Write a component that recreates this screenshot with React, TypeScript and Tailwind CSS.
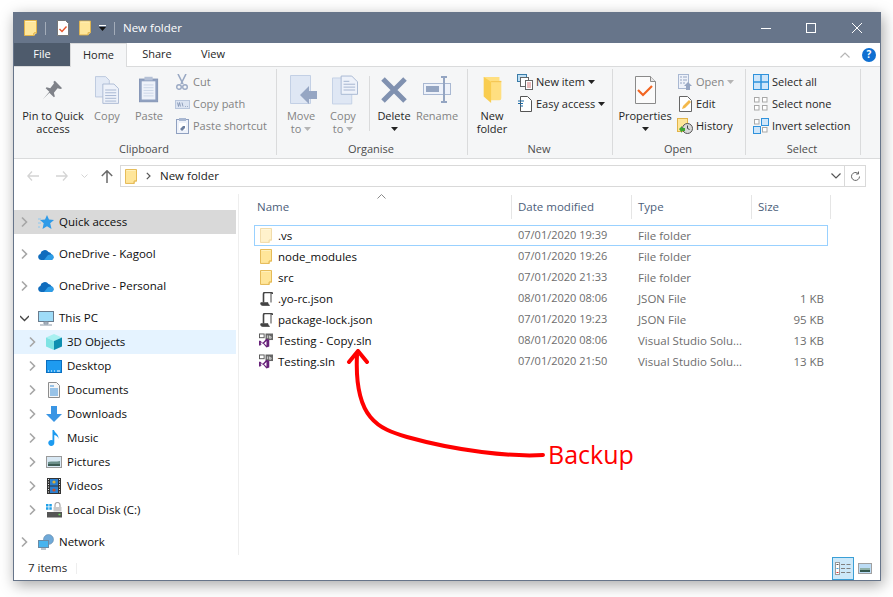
import type { ReactNode } from 'react'

const Folder = ({ w = 13, h = 16, faded = false }: { w?: number; h?: number; faded?: boolean }) => (
  <svg width={w} height={h} viewBox="0 0 13 16" opacity={faded ? 0.5 : 1} className="shrink-0">
    <path d="M.5.5h12v12.5h-2.5v2.5H.5z" fill="#ffe69a" stroke="#e2b44a" />
    <path d="M10 15.5V13h2.5" fill="#fff3c4" stroke="#e2b44a" />
    <path d="M1.500 1.500h10" stroke="#fff2c0" />
  </svg>
)

const Chevron = ({ open = false }: { open?: boolean }) => (
  <svg width="9" height="12" viewBox="0 0 9 12" className="shrink-0">
    {open ? (
      <path d="M0 4l4.500 4.500L9 4" fill="none" stroke="#444" strokeWidth="1.300" />
    ) : (
      <path d="M2 1.500L6.500 6 2 10.500" fill="none" stroke="#a6a6a6" strokeWidth="1.600" />
    )}
  </svg>
)

const Caret = ({ color = '#222' }: { color?: string }) => (
  <svg width="7" height="4" viewBox="0 0 7 4" className="shrink-0">
    <path d="M0 0h7L3.500 4z" fill={color} />
  </svg>
)

const Pin = () => (
  <svg width="22" height="22" viewBox="0 0 24 24">
    <path d="M14 2l8 8-2 1-3-1-4 5 1 4-1 1-5-5-7 7 7-8-4-4 1-1 4 1 4-5-.5-2z" fill="#7f8289" />
  </svg>
)

const CopyDocs = () => (
  <svg width="24" height="28" viewBox="0 0 26 30">
    <path d="M.5.5h11l4 4v18H.5z" fill="#e3eaf6" stroke="#b9c6dc" />
    <path d="M8.500 8.500h12l5 5v16h-17z" fill="#eef2fa" stroke="#a9b8d2" />
    <path d="M11 15h12M11 18h12M11 21h12M11 24h12M11 27h12" stroke="#a3b3cf" />
  </svg>
)

const PasteBoard = () => (
  <svg width="20" height="29" viewBox="0 0 22 30">
    <rect x=".5" y="3.500" width="20" height="25" fill="#8fa0c0" stroke="#8394b5" />
    <rect x="3" y="6" width="15" height="20" fill="#eef2fa" />
    <path d="M5 10h11M5 13h11M5 16h11M5 19h11M5 22h11" stroke="#c9d4e6" />
    <rect x="6" y="1" width="9" height="4" fill="#b4c0d6" />
  </svg>
)

const Scissors = () => (
  <svg width="12" height="16" viewBox="0 0 12 16">
    <path d="M2 0l5 10M10 0L5 10" stroke="#9aa9c4" strokeWidth="1.600" fill="none" />
    <circle cx="3" cy="13" r="2.300" fill="none" stroke="#9aa9c4" strokeWidth="1.400" />
    <circle cx="9" cy="13" r="2.300" fill="none" stroke="#9aa9c4" strokeWidth="1.400" />
  </svg>
)

const CopyPath = () => (
  <svg width="15" height="9" viewBox="0 0 15 9">
    <rect x=".5" y=".5" width="14" height="8" fill="#dce4f2" stroke="#b9c6dc" />
    <path d="M2.500 2.500l1 4 1-4 1 4M7 2.500l1 4M10 6.500h.8M12 6.500h.8" stroke="#7e8fae" strokeWidth=".8" fill="none" />
  </svg>
)

const PasteShortcut = () => (
  <svg width="13" height="16" viewBox="0 0 13 16">
    <rect x=".5" y="1.500" width="12" height="14" fill="#eef2fa" stroke="#8fa0c0" />
    <rect x="3" y="0" width="7" height="3" fill="#a9b8d2" />
    <rect x="3" y="5" width="7" height="7" fill="#fff" />
    <path d="M4 11l3-3H5h4v4v-2l-3 3z" fill="#6c7f9f" />
  </svg>
)

const MoveTo = () => (
  <svg width="27" height="29" viewBox="0 0 27 29">
    <path d="M.5.5h20v28H.5z" fill="#dfe7f4" stroke="#c3d0e5" />
    <path d="M10 20l9-9v5h8v8h-8v5z" fill="#96a6c3" />
  </svg>
)

const CopyTo = () => (
  <svg width="26" height="30" viewBox="0 0 27 30">
    <path d="M.5 2.500h20v27H.5z" fill="#dfe7f4" stroke="#c3d0e5" />
    <path d="M9.500.5h11l6 6v13h-17z" fill="#eef2fa" stroke="#a9b8d2" />
    <path d="M12 6h6M12 9h12M12 12h12M12 15h12" stroke="#a3b3cf" />
  </svg>
)

const DeleteX = () => (
  <svg width="26" height="26" viewBox="0 0 26 26">
    <path d="M2 2l22 22M24 2L2 24" stroke="#8091b0" strokeWidth="5" />
  </svg>
)

const RenameIcon = () => (
  <svg width="28" height="27" viewBox="0 0 28 27">
    <rect x=".5" y="7.500" width="27" height="11" fill="#eef2fa" stroke="#a9b8d2" />
    <rect x="3" y="10" width="13" height="6" fill="#94a5c2" />
    <path d="M18 1h6M21 1v25M18 26h6" stroke="#94a5c2" strokeWidth="2" fill="none" />
  </svg>
)

const NewFolderIcon = () => (
  <svg width="19" height="26" viewBox="0 0 19 28">
    <path d="M0 0h17v4h2v19a2 2 0 0 1-2 2H7z" fill="#ffdf80" />
    <path d="M8 5h11" stroke="#f2c04a" />
    <path d="M0 0l8 5v23L0 21z" fill="#f9cd50" />
  </svg>
)

const NewItem = () => (
  <svg width="16" height="16" viewBox="0 0 16 16">
    <rect x=".5" y=".5" width="9" height="7" fill="#bfe0f5" stroke="#3a7ca8" />
    <rect x="3.500" y="3.500" width="8" height="9" fill="#fff" stroke="#666" />
    <rect x="8.500" y="6.500" width="7" height="9" fill="#fff" stroke="#666" />
    <path d="M10 9h4M10 11h4M10 13h4" stroke="#c55" strokeWidth=".8" />
  </svg>
)

const EasyAccess = () => (
  <svg width="14" height="16" viewBox="0 0 14 16">
    <path d="M2.500.5h7l4 4v11h-11z" fill="#fff" stroke="#555" />
    <path d="M0 5h6M0 7.500h5M2 10h3" stroke="#1b6aa5" strokeWidth="1.100" />
  </svg>
)

const PropertiesIcon = () => (
  <svg width="21" height="28" viewBox="0 0 21 28">
    <path d="M.5.5h15l5 5v22H.5z" fill="#fbfbfb" stroke="#8a8a8a" />
    <path d="M15.500.5v5h5" fill="#e6e6e6" stroke="#8a8a8a" />
    <path d="M3 14l5 5 9-9" fill="none" stroke="#f26522" strokeWidth="2.200" />
  </svg>
)

const OpenIcon = () => (
  <svg width="14" height="16" viewBox="0 0 14 16">
    <rect x=".5" y=".5" width="10" height="14" fill="#eef2fa" stroke="#a9b8d2" />
    <path d="M2 3h2M5 3h4M2 6h2M5 6h4M2 9h2M5 9h2" stroke="#96a6c3" />
    <path d="M10 8l4 4h-2v4H8v-4H6z" fill="#96a6c3" />
  </svg>
)

const EditIcon = () => (
  <svg width="13" height="16" viewBox="0 0 13 16">
    <path d="M.5.5h8l4 4v11H.5z" fill="#fff" stroke="#666" />
    <path d="M3 13l1-3 6-6 2 2-6 6z" fill="#f3b84a" />
  </svg>
)

const HistoryIcon = () => (
  <svg width="16" height="16" viewBox="0 0 16 16">
    <rect x=".5" y=".5" width="10" height="13" fill="#ffe69a" stroke="#e2b44a" />
    <circle cx="10.500" cy="10.500" r="5" fill="#d8d8d8" stroke="#555" />
    <path d="M10.500 7.500v3l2 1" fill="none" stroke="#444" />
    <path d="M2 11l3-3v2h3v3H5v2z" fill="#3fa535" />
  </svg>
)

const SelectAll = () => (
  <svg width="16" height="16" viewBox="0 0 16 16">
    <rect x=".5" y=".5" width="15" height="15" fill="#cfe6fa" stroke="#2f92dc" />
    <path d="M8 0v16M0 8h16" stroke="#2f92dc" strokeWidth="1.500" />
  </svg>
)

const SelectNone = () => (
  <svg width="16" height="16" viewBox="0 0 16 16" fill="#fff" stroke="#a8a8a8">
    <rect x="1.500" y="1.500" width="4.500" height="4.500" />
    <rect x="9.500" y="1.500" width="4.500" height="4.500" />
    <rect x="1.500" y="9.500" width="4.500" height="4.500" />
    <rect x="9.500" y="9.500" width="4.500" height="4.500" />
  </svg>
)

const SelectInvert = () => (
  <svg width="16" height="16" viewBox="0 0 16 16">
    <rect x="1.500" y="1.500" width="4.500" height="4.500" fill="#fff" stroke="#a8a8a8" />
    <rect x="8.500" y=".5" width="7" height="7" fill="#cfe6fa" stroke="#2f92dc" />
    <rect x=".5" y="8.500" width="7" height="7" fill="#cfe6fa" stroke="#2f92dc" />
    <rect x="9.500" y="9.500" width="4.500" height="4.500" fill="#fff" stroke="#a8a8a8" />
  </svg>
)

const BigButton = ({
  icon,
  lines,
  width,
  disabled = false,
  caret = false,
}: {
  icon: ReactNode
  lines: ReactNode[]
  width: string
  disabled?: boolean
  caret?: boolean
}) => (
  <div className={`flex flex-col items-center ${width} ${disabled ? 'text-[#838383]' : 'text-[#262626]'}`}>
    <div className="h-[42px] pt-[3px] flex items-center justify-center">{icon}</div>
    {lines.map((l, i) => (
      <div key={i} className="h-[13px] leading-[13px] flex items-center gap-[3px] whitespace-nowrap">
        {l}
      </div>
    ))}
    {caret && (
      <div className="h-[13px] flex items-center">
        <Caret />
      </div>
    )}
  </div>
)

const SmallButton = ({
  icon,
  label,
  disabled = false,
  caret = false,
}: {
  icon: ReactNode
  label: string
  disabled?: boolean
  caret?: boolean
}) => (
  <div className={`h-[22px] flex items-center gap-[2px] whitespace-nowrap ${disabled ? 'text-[#838383]' : 'text-[#262626]'}`}>
    <div className="w-[18px] flex justify-center">{icon}</div>
    <span>{label}</span>
    {caret && (
      <span className="ml-[1px]">
        <Caret color={disabled ? '#b5b5b5' : '#222'} />
      </span>
    )}
  </div>
)

const Group = ({ width, label, children }: { width: string; label: string; children: ReactNode }) => (
  <div className={`${width} h-[91px] flex flex-col shrink-0 relative`}>
    <div className="h-[74px] flex">{children}</div>
    <div className="h-[16px] leading-[16px] text-center text-[#4c4c4c] whitespace-nowrap pr-[3px]">{label}</div>
    <div className="absolute right-0 top-[2px] bottom-[3px] w-px bg-[#dadbdc]" />
  </div>
)

const Star = () => (
  <svg width="16" height="16" viewBox="0 0 16 16">
    <path d="M9 1l2 4.600 5 .4-3.800 3.200L13.500 15 9 12.300 4.500 15l1.200-5.800L2 6l5-.4z" fill="#2f9be8" />
    <path d="M0 5h3M0 9h3M0 13h2" stroke="#8cc8f0" />
  </svg>
)

const Cloud = () => (
  <svg width="16" height="11" viewBox="0 0 16 11">
    <path d="M3 11a3 3 0 0 1-.6-5.900A4.500 4.500 0 0 1 10.500 3a3.500 3.500 0 0 1 3 2.300A3 3 0 0 1 13.500 11z" fill="#0f6cbd" />
    <path d="M6 11l4-5 3.500-.7A3 3 0 0 1 13.500 11z" fill="#2e9de6" />
  </svg>
)

const Monitor = () => (
  <svg width="16" height="15" viewBox="0 0 16 15">
    <rect x=".5" y=".5" width="15" height="10" fill="#9fdcf8" stroke="#6a7c8e" />
    <path d="M6 11h4v2H6zM2 14h12" stroke="#8a97a5" fill="#b8c2cc" />
  </svg>
)

const Cube = () => (
  <svg width="16" height="16" viewBox="0 0 16 16">
    <path d="M8 0l8 3.500L8 7 0 3.500z" fill="#a8f0f0" />
    <path d="M0 3.500L8 7v9l-8-3.500z" fill="#7fe3e3" />
    <path d="M16 3.500L8 7v9l8-3.500z" fill="#0f8fb0" />
  </svg>
)

const DesktopIcon = () => (
  <svg width="16" height="13" viewBox="0 0 16 13">
    <rect x=".5" y=".5" width="15" height="12" fill="#1e9bf0" stroke="#0b6fc0" />
    <path d="M2 11h1M5 11h1M8 11h1M11 11h3" stroke="#fff" />
  </svg>
)

const DocumentsIcon = () => (
  <svg width="12" height="16" viewBox="0 0 12 16">
    <path d="M.5.5h8l3 3v12H.5z" fill="#f6f6f6" stroke="#8d8d8d" />
    <path d="M2 4h4M2 7h8M2 9h8M2 11h8M2 13h8" stroke="#3a8fd8" />
  </svg>
)

const DownloadsIcon = () => (
  <svg width="16" height="16" viewBox="0 0 16 16">
    <path d="M5 0h6v8h5l-8 8-8-8h5z" fill="#3a95e4" />
  </svg>
)

const MusicIcon = () => (
  <svg width="12" height="16" viewBox="0 0 12 16">
    <path d="M4.500 0H6c.5 3 5 4 4.500 9-.2-2-2-3.500-4.200-4v8a3 3 0 1 1-1.800-2.800z" fill="#1d9bf0" />
  </svg>
)

const PicturesIcon = () => (
  <svg width="16" height="12" viewBox="0 0 16 12">
    <rect x=".5" y=".5" width="15" height="11" fill="#d8e8f4" stroke="#9a9a9a" />
    <path d="M2 6c4-1 8 0 12-1v5H2z" fill="#6b8f8a" />
    <path d="M2 8h12v2H2z" fill="#3d5d55" />
  </svg>
)

const VideosIcon = () => (
  <svg width="14" height="16" viewBox="0 0 14 16">
    <rect width="14" height="16" fill="#333" />
    <rect x="3" y="1" width="8" height="6.500" fill="#2b7fd0" />
    <rect x="3" y="8.500" width="8" height="6.500" fill="#2b7fd0" />
    <circle cx="7" cy="4" r="1.600" fill="#d8b03a" />
    <circle cx="7" cy="12" r="1.600" fill="#c5502e" />
    <path d="M1.500 1v14M12.500 1v14" stroke="#eee" strokeDasharray="1 1.500" />
  </svg>
)

const DiskIcon = () => (
  <svg width="16" height="16" viewBox="0 0 16 16">
    <path d="M0 2h2.500v2.500H0zM3.300 2h2.500v2.500H3.300zM0 5.300h2.500v2.500H0zM3.300 5.300h2.500v2.500H3.300z" fill="#1fa0e8" />
    <path d="M9 5V3a2.500 2.500 0 0 1 5 0v2" fill="none" stroke="#a8a8a8" strokeWidth="1.200" />
    <rect x="7.500" y="5" width="8" height="4.500" fill="#c9c9c9" />
    <rect x="1" y="10" width="15" height="5.500" fill="#555" />
    <path d="M12.500 12.500h2" stroke="#6fdc5a" strokeWidth="1.500" />
  </svg>
)

const NetworkIcon = () => (
  <svg width="16" height="16" viewBox="0 0 16 16">
    <circle cx="10.500" cy="5.500" r="5" fill="#6fa9d8" stroke="#5a7f9f" strokeWidth=".5" />
    <rect x=".5" y="6.500" width="10" height="7" fill="#49b4ee" stroke="#6a8aa5" />
    <path d="M3 15h5" stroke="#7a8a9a" />
  </svg>
)

const JsonIcon = () => (
  <svg width="13" height="14" viewBox="0 0 13 14" fill="none" stroke="#444">
    <path d="M3.500 10.500V2A1.500 1.500 0 0 1 5 .5h6A1.500 1.500 0 0 1 12.500 2" strokeWidth="1.600" />
    <path d="M11 1v9.500" />
    <path d="M.8 10.800H8v1a1.500 1.500 0 0 0 1.500 1.500H2.200A1.500 1.500 0 0 1 .8 11.800z" fill="#444" />
  </svg>
)

const SlnIcon = () => (
  <svg width="15" height="15" viewBox="0 0 15 15">
    <rect x=".5" y=".5" width="5" height="4" fill="#fff" stroke="#555" />
    <rect x="7" y="0" width="8" height="7" fill="#666" />
    <path d="M9 2v3M11 2v3h2V3.500h-2" stroke="#fff" strokeWidth=".7" fill="none" />
    <path d="M0 8l1-.5L4 10l4-4.500 3 1.500v7l-3 1-4-4.500-3 2.500-1-.5z" fill="#68217a" />
    <path d="M2 9v3l1.500-1.500zM8 8v5l-2.500-2.500z" fill="#fff" />
  </svg>
)

const SideRow = ({
  icon,
  label,
  level = 0,
  open = false,
  bg = '',
}: {
  icon: ReactNode
  label: string
  level?: number
  open?: boolean
  bg?: string
}) => (
  <div className={`h-[24px] flex items-center whitespace-nowrap text-[#0d0d0d] ${level ? 'pl-[14px]' : 'pl-[6px]'} ${bg}`}>
    <Chevron open={open} />
    <div className="w-[16px] ml-[9px] flex justify-center">{icon}</div>
    <span className="ml-[5px]">{label}</span>
  </div>
)

const files = [
  { name: '.vs', date: '07/01/2020 19:39', type: 'File folder', size: '', icon: <Folder w={12} h={15} faded /> },
  { name: 'node_modules', date: '07/01/2020 19:26', type: 'File folder', size: '', icon: <Folder w={12} h={15} /> },
  { name: 'src', date: '07/01/2020 21:33', type: 'File folder', size: '', icon: <Folder w={12} h={15} /> },
  { name: '.yo-rc.json', date: '08/01/2020 08:06', type: 'JSON File', size: '1 KB', icon: <JsonIcon /> },
  { name: 'package-lock.json', date: '07/01/2020 19:23', type: 'JSON File', size: '95 KB', icon: <JsonIcon /> },
  { name: 'Testing - Copy.sln', date: '08/01/2020 08:06', type: 'Visual Studio Solu...', size: '13 KB', icon: <SlnIcon /> },
  { name: 'Testing.sln', date: '07/01/2020 21:50', type: 'Visual Studio Solu...', size: '13 KB', icon: <SlnIcon /> },
]

export default function App() {
  return (
    <div className="w-[893px] h-[597px] bg-white pt-[12px] pl-[13px] overflow-hidden font-['Open_Sans',sans-serif] text-[11.5px]">
      <div className="relative w-[868px] h-[569px] border border-[#67758a] bg-white flex flex-col shadow-[2px_4px_14px_rgba(0,0,0,0.35)]">
        {/* title bar */}
        <div className="h-[30px] bg-[#67758a] flex items-center text-white shrink-0">
          <div className="ml-[10px]">
            <Folder />
          </div>
          <div className="ml-[8px] w-px h-[13px] bg-[#a3acb9]" />
          <svg width="12" height="16" viewBox="0 0 12 16" className="ml-[11px]">
            <path d="M.5.5h8l3 3v12H.5z" fill="#fff" stroke="#777" />
            <path d="M2.500 9L5 11.500l4.500-5" fill="none" stroke="#e8542a" strokeWidth="1.400" />
          </svg>
          <div className="ml-[10px]">
            <Folder w={12} />
          </div>
          <div className="ml-[8px] flex flex-col gap-[1px] items-center">
            <div className="w-[7px] h-px bg-white" />
            <Caret color="#111" />
          </div>
          <div className="ml-[8px] w-px h-[13px] bg-[#a3acb9]" />
          <span className="ml-[8px]">New folder</span>
          <div className="ml-auto flex items-center">
            <div className="w-[10px] h-px bg-white mr-[35px]" />
            <div className="w-[10px] h-[10px] border border-white mr-[36px]" />
            <svg width="10" height="10" viewBox="0 0 10 10" className="mr-[18px]">
              <path d="M0 0l10 10M10 0L0 10" stroke="#fff" />
            </svg>
          </div>
        </div>

        {/* tabs */}
        <div className="h-[24px] flex items-stretch shrink-0 border-b border-[#dadbdc] text-[11px]">
          <div className="w-[56px] bg-[#4e5b6c] text-white flex items-center justify-center">File</div>
          <div className="w-[57px] h-[24px] bg-[#f5f6f7] border-x border-t border-[#dadbdc] flex items-center justify-center text-[#262626]">
            Home
          </div>
          <div className="w-[60px] flex items-center justify-center text-[#262626]">Share</div>
          <div className="w-[52px] flex items-center justify-center text-[#262626]">View</div>
          <div className="ml-auto flex items-center">
            <svg width="10" height="6" viewBox="0 0 10 6" className="mr-[12px]">
              <path d="M.5 5.500L5 1l4.500 4.500" fill="none" stroke="#b5b5b5" strokeWidth="1.200" />
            </svg>
            <div className="w-[14px] h-[14px] rounded-full bg-[#0f6fd1] text-white text-[10px] font-bold flex items-center justify-center mr-[4px]">
              ?
            </div>
          </div>
        </div>

        {/* ribbon */}
        <div className="h-[92px] bg-[#f5f6f7] border-b border-[#dadbdc] flex shrink-0 text-[11px]">
          <Group width="w-[263px]" label="Clipboard">
            <div className="w-[3px]" />
            <BigButton width="w-[72px]" icon={<Pin />} lines={['Pin to Quick', 'access']} />
            <BigButton width="w-[36px]" disabled icon={<CopyDocs />} lines={['Copy']} />
            <BigButton width="w-[48px]" disabled icon={<PasteBoard />} lines={['Paste']} />
            <div className="pt-[4px]">
              <SmallButton disabled icon={<Scissors />} label="Cut" />
              <SmallButton disabled icon={<CopyPath />} label="Copy path" />
              <SmallButton disabled icon={<PasteShortcut />} label="Paste shortcut" />
            </div>
          </Group>
          <Group width="w-[191px]" label="Organise">
            <div className="w-[4px]" />
            <BigButton
              width="w-[40px]"
              disabled
              icon={<div className="ml-[5px]"><MoveTo /></div>}
              lines={['Move', <>to <Caret color="#b5b5b5" /></>]}
            />
            <BigButton
              width="w-[44px]"
              disabled
              icon={<div className="ml-[4px]"><CopyTo /></div>}
              lines={['Copy', <>to <Caret color="#b5b5b5" /></>]}
            />
            <div className="w-px h-[55px] bg-[#dadbdc] ml-[4px] mt-[9px]" />
            <BigButton width="w-[48px]" icon={<DeleteX />} lines={['Delete']} caret />
            <BigButton width="w-[38px]" disabled icon={<RenameIcon />} lines={['Rename']} />
          </Group>
          <Group width="w-[145px]" label="New">
            <div className="w-[2px]" />
            <BigButton width="w-[44px]" icon={<NewFolderIcon />} lines={['New', 'folder']} />
            <div className="pt-[4px] pl-[2px]">
              <SmallButton icon={<NewItem />} label="New item" caret />
              <SmallButton icon={<EasyAccess />} label="Easy access" caret />
            </div>
          </Group>
          <Group width="w-[133px]" label="Open">
            <div className="w-[1px]" />
            <BigButton width="w-[62px]" icon={<PropertiesIcon />} lines={['Properties']} caret />
            <div className="pt-[4px]">
              <SmallButton disabled caret icon={<OpenIcon />} label="Open" />
              <SmallButton icon={<EditIcon />} label="Edit" />
              <SmallButton icon={<HistoryIcon />} label="History" />
            </div>
          </Group>
          <Group width="w-[115px]" label="Select">
            <div className="w-[6px]" />
            <div className="pt-[4px]">
              <SmallButton icon={<SelectAll />} label="Select all" />
              <SmallButton icon={<SelectNone />} label="Select none" />
              <SmallButton icon={<SelectInvert />} label="Invert selection" />
            </div>
          </Group>
        </div>

        {/* address bar */}
        <div className="h-[31px] pt-[3px] flex items-center shrink-0">
          <svg width="12" height="10" viewBox="0 0 12 10" className="ml-[13px]">
            <path d="M5 .5L.8 5 5 9.500M1 5h11" fill="none" stroke="#d4d4d4" strokeWidth="1.300" />
          </svg>
          <svg width="12" height="10" viewBox="0 0 12 10" className="ml-[17px]">
            <path d="M7 .5L11.200 5 7 9.500M11 5H0" fill="none" stroke="#d4d4d4" strokeWidth="1.300" />
          </svg>
          <svg width="7" height="4" viewBox="0 0 7 4" className="ml-[13px]">
            <path d="M.5.5l3 3 3-3" fill="none" stroke="#d4d4d4" />
          </svg>
          <svg width="12" height="13" viewBox="0 0 12 13" className="ml-[13px]">
            <path d="M.8 6L6 .8 11.200 6M6 1v12" fill="none" stroke="#6a6a6a" strokeWidth="1.500" />
          </svg>
          <div className="ml-[7px] w-[725px] h-[22px] border border-[#d9d9d9] flex items-center">
            <div className="ml-[4px]">
              <Folder w={12} h={15} />
            </div>
            <svg width="5" height="8" viewBox="0 0 5 8" className="ml-[9px]">
              <path d="M.8.8L4 4 .8 7.200" fill="none" stroke="#555" strokeWidth="1.200" />
            </svg>
            <span className="ml-[9px] text-[#1a1a1a]">New folder</span>
            <svg width="10" height="6" viewBox="0 0 10 6" className="ml-auto mr-[3px]">
              <path d="M.5.5L5 5 9.500.5" fill="none" stroke="#555" strokeWidth="1.200" />
            </svg>
          </div>
          <div className="w-[21px] h-[22px] border border-l-0 border-[#d9d9d9] flex items-center justify-center">
            <svg width="11" height="11" viewBox="0 0 11 11">
              <path d="M9.500 5.500a4 4 0 1 1-1.300-3M8.500.5V3H6" fill="none" stroke="#666" />
            </svg>
          </div>
        </div>

        {/* body */}
        <div className="flex-1 flex min-h-0">
          <div className="w-[224px] shrink-0 pr-[2px] pt-[20px]">
            <SideRow icon={<Star />} label="Quick access" bg="bg-[#d9d9d9]" />
            <div className="h-[8px]" />
            <SideRow icon={<Cloud />} label="OneDrive - Kagool" />
            <div className="h-[8px]" />
            <SideRow icon={<Cloud />} label="OneDrive - Personal" />
            <div className="h-[8px]" />
            <SideRow icon={<Monitor />} label="This PC" open />
            <SideRow level={1} icon={<Cube />} label="3D Objects" bg="bg-[#e5f3ff]" />
            <SideRow level={1} icon={<DesktopIcon />} label="Desktop" />
            <SideRow level={1} icon={<DocumentsIcon />} label="Documents" />
            <SideRow level={1} icon={<DownloadsIcon />} label="Downloads" />
            <SideRow level={1} icon={<MusicIcon />} label="Music" />
            <SideRow level={1} icon={<PicturesIcon />} label="Pictures" />
            <SideRow level={1} icon={<VideosIcon />} label="Videos" />
            <SideRow level={1} icon={<DiskIcon />} label="Local Disk (C:)" />
            <div className="h-[8px]" />
            <SideRow icon={<NetworkIcon />} label="Network" />
          </div>
          <div className="w-px h-[361px] mt-[4px] bg-[#eeeeee] shrink-0" />

          {/* files */}
          <div className="flex-1 min-w-0 pt-[5px] relative">
            <svg width="9" height="5" viewBox="0 0 9 5" className="absolute left-[138px] top-[4px]">
              <path d="M.5 4.500l4-4 4 4" fill="none" stroke="#8a8a8a" />
            </svg>
            <div className="h-[24px] flex text-[#4c607a] ml-[11px]">
              <div className="w-[261px] pl-[7px] leading-[24px]">Name</div>
              <div className="w-[120px] border-l border-[#e5e5e5] pl-[6px] leading-[24px]">Date modified</div>
              <div className="w-[120px] border-l border-[#e5e5e5] pl-[6px] leading-[24px]">Type</div>
              <div className="w-[80px] border-x border-[#e5e5e5] pl-[6px] leading-[24px]">Size</div>
            </div>
            <div className="mt-[6px] ml-[15px] w-[574px]">
              {files.map((f, i) => (
                <div
                  key={f.name}
                  className={`h-[21px] flex items-center border ${i === 0 ? 'border-[#99d1ff]' : 'border-transparent'}`}
                >
                  <div className="w-[263px] flex items-center shrink-0">
                    <div className="w-[14px] ml-[4px] mr-[5px] flex justify-center">{f.icon}</div>
                    <span className="text-[#0d0d0d] whitespace-nowrap">{f.name}</span>
                  </div>
                  <div className="w-[120px] text-[11px] text-[#6d6d6d] whitespace-nowrap">{f.date}</div>
                  <div className="w-[120px] text-[#6d6d6d] whitespace-nowrap">{f.type}</div>
                  <div className="w-[66px] text-right text-[#6d6d6d]">{f.size}</div>
                </div>
              ))}
            </div>
          </div>
        </div>

        {/* status bar */}
        <div className="h-[24px] flex items-center shrink-0 text-[#262626]">
          <span className="ml-[14px] w-[48px]">7 items</span>
          <div className="w-px h-[11px] bg-[#eeeeee]" />
          <div className="ml-auto flex items-center">
            <div className="w-[22px] h-[23px] border border-[#3a9fd6] bg-[#cce8f9] flex items-center justify-center">
              <svg width="16" height="13" viewBox="0 0 16 13">
                <rect x=".5" y=".5" width="4" height="12" fill="#fff" stroke="#9a9a9a" />
                <path d="M1.500 2.500h2" stroke="#555" />
                <path d="M1.500 6.500h2" stroke="#3a9fd6" />
                <path d="M1.500 10.500h2" stroke="#d33" />
                <path d="M6 2.500h4M11.500 2.500h4M6 6.500h4M11.500 6.500h4M6 10.500h4M11.500 10.500h4" stroke="#808080" />
              </svg>
            </div>
            <svg width="14" height="11" viewBox="0 0 14 11" className="ml-[4px] mr-[8px]">
              <rect x=".5" y=".5" width="13" height="10" fill="#bcdcf5" stroke="#a0a0a0" />
              <path d="M2 5h10v2H2z" fill="#8fb0a8" />
              <path d="M2 7h10v2H2z" fill="#34594f" />
            </svg>
          </div>
        </div>

        {/* hand-drawn annotation */}
        <svg
          width="220"
          height="130"
          viewBox="0 0 220 130"
          className="absolute left-[332px] top-[336px] pointer-events-none"
        >
          <path
            d="M197 106C165 108 111 102 61 88C33 80 8 70 11 6"
            fill="none"
            stroke="#ff0000"
            strokeWidth="4"
            strokeLinecap="round"
          />
          <path d="M3 13L12 2L21 13" fill="none" stroke="#ff0000" strokeWidth="4" strokeLinecap="round" />
        </svg>
        <span className="absolute left-[534px] top-[423px] text-[25px] leading-[36px] text-[#ff0000]">Backup</span>
      </div>
    </div>
  )
}
